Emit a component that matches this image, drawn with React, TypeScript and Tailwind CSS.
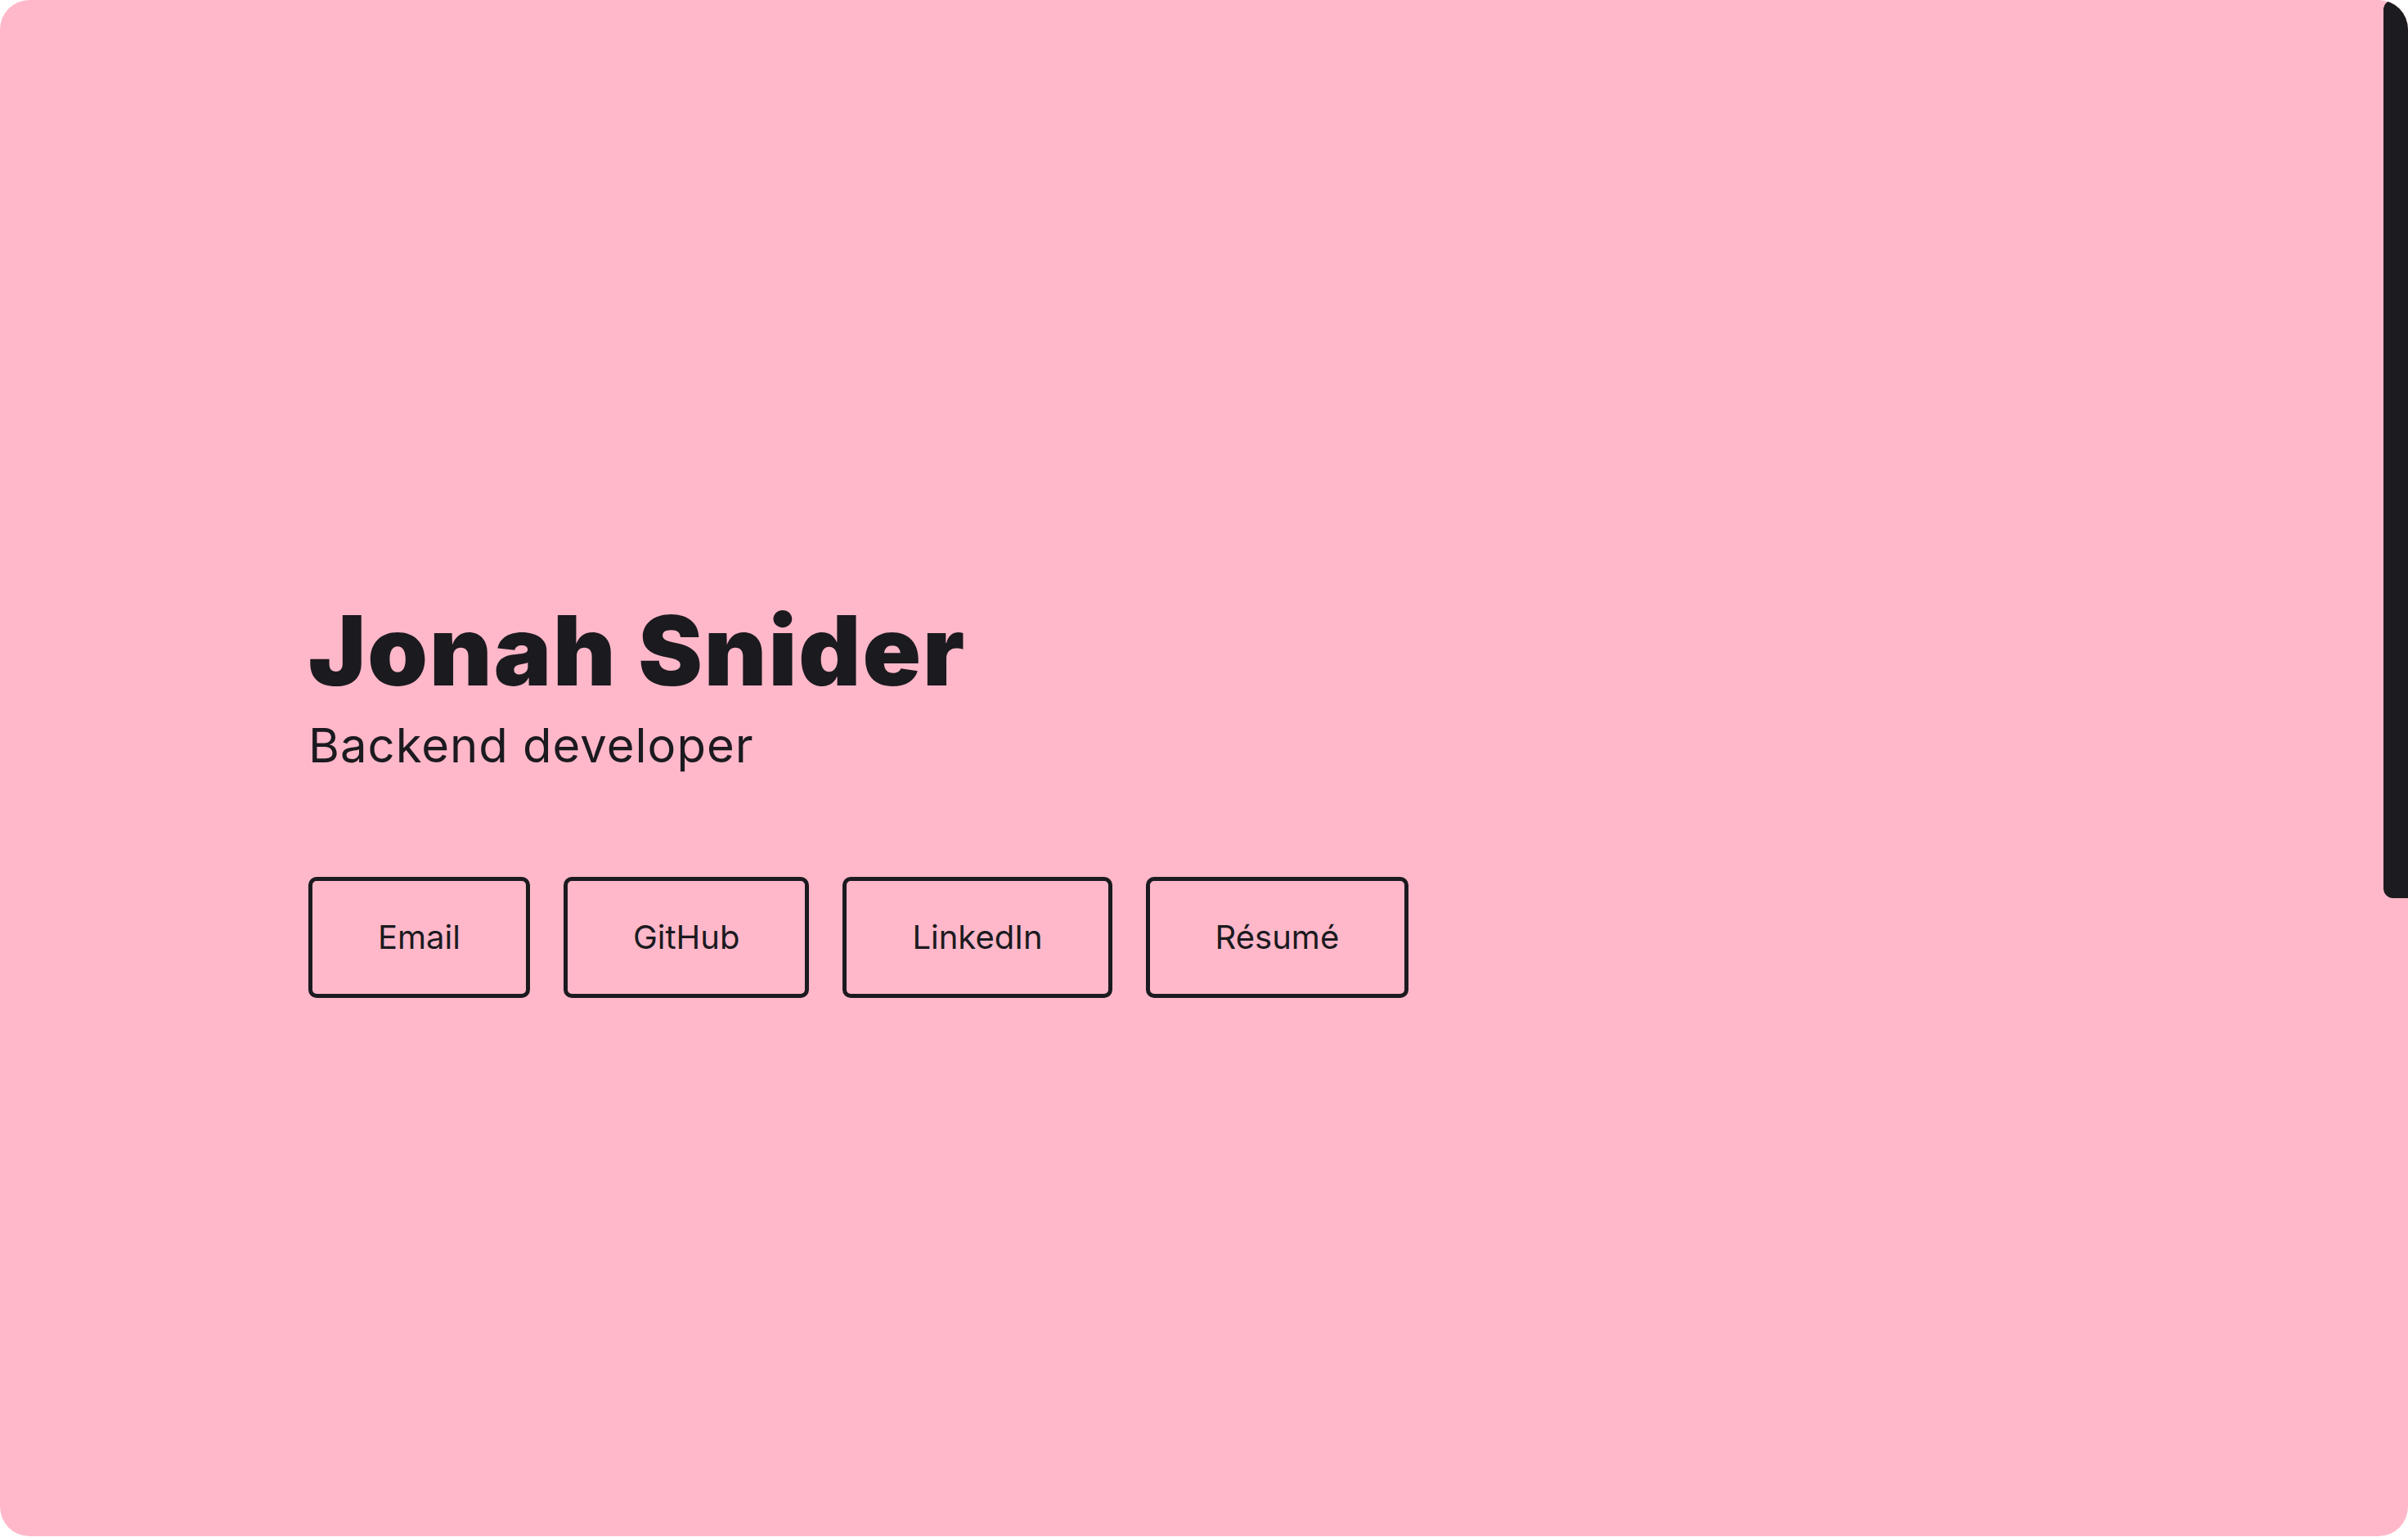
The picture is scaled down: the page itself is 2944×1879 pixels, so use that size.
import React from "react";

const links = ["Email", "GitHub", "LinkedIn", "Résumé"];

export default function App() {
  return (
    <div className="w-[2944px] h-[1879px] bg-white overflow-hidden">
      <div
        className="relative h-[1878px] w-full rounded-[36px] overflow-hidden bg-[#ffb8c9] text-[#1b1a1f]"
        style={{ fontFamily: "Inter, 'Noto Sans', sans-serif" }}
      >
        <div className="flex flex-col pl-[377px] pt-[736px]">
          <h1 className="text-[118px] leading-none font-black tracking-[2px]">Jonah Snider</h1>
          <p className="mt-[23px] text-[58px] leading-[1.2] font-normal tracking-[1px]">Backend developer</p>
          <div className="mt-[125px] flex gap-[41px]">
            {links.map((l) => (
              <a
                key={l}
                href="#"
                className="border-[5px] border-[#1b1a1f] rounded-[10px] px-[80px] py-[45px] text-[40px] leading-[48px] no-underline"
              >
                {l}
              </a>
            ))}
          </div>
        </div>
        <div className="absolute right-0 top-0 w-[30px] h-[1098px] rounded-l-[12px] bg-[#1c1b20]" />
      </div>
    </div>
  );
}
